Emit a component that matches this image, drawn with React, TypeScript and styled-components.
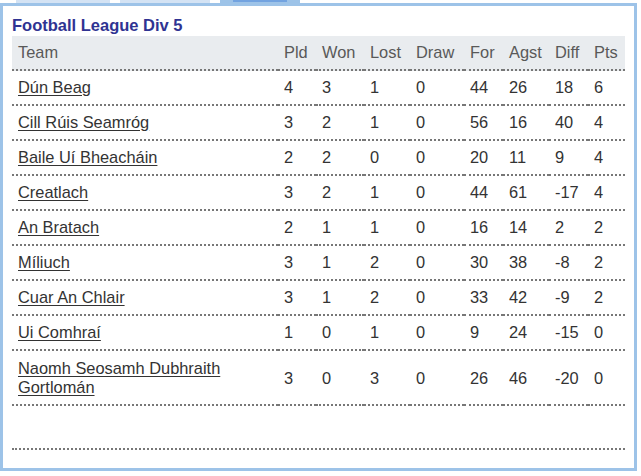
import React from "react";
import styled, { createGlobalStyle } from "styled-components";

const Global = createGlobalStyle`
  html, body { margin: 0; padding: 0; background: #ffffff; }
  body { font-family: "Liberation Sans", Arial, sans-serif; }
`;

const Page = styled.div`
  width: 641px;
  height: 476px;
  overflow: hidden;
  background: #ffffff;
`;

const TabBar = styled.div`
  display: flex;
  gap: 10px;
  height: 3px;
  padding-left: 16px;
`;

const Tab = styled.div<{ $w: number; $active?: boolean }>`
  width: ${(p) => p.$w}px;
  height: 3px;
  background: ${(p) => (p.$active ? "#9dc3e8" : "#d4e3f4")};
  display: flex;
  justify-content: center;
  &::after {
    content: "";
    display: ${(p) => (p.$active ? "block" : "none")};
    width: 54px;
    height: 2px;
    background: #72a3e0;
  }
`;

const Panel = styled.div`
  box-sizing: border-box;
  width: 637px;
  height: 468px;
  border: 3px solid #9dc3e8;
  padding: 9px 0 0 9px;
`;

const Title = styled.h2`
  margin: 0;
  font-size: 16.5px;
  line-height: 20px;
  font-weight: bold;
  color: #2f3392;
`;

const Table = styled.table`
  margin-top: 1px;
  width: 613px;
  table-layout: fixed;
  border-collapse: separate;
  border-spacing: 0;
  font-size: 16.4px;
  line-height: 19px;
  color: #333333;
`;

const HeadCell = styled.th`
  background: #e9ecef;
  color: #595959;
  font-weight: normal;
  text-align: left;
  padding: 7px 6px 7px;
  border-bottom: 2px dotted #777777;
  white-space: nowrap;
`;

const Cell = styled.td<{ $tall?: boolean }>`
  text-align: left;
  vertical-align: middle;
  padding: ${(p) => (p.$tall ? "8px 6px 7px" : "7px 6px")};
  border-bottom: 2px dotted #777777;
  white-space: nowrap;
`;

const TeamCell = styled(Cell)`
  white-space: normal;
`;

const TeamLink = styled.a`
  color: #333333;
  text-decoration: underline;
  text-underline-offset: 2px;
`;

const EmptyCell = styled.td`
  height: 42px;
  padding: 0;
  border-bottom: 2px dotted #777777;
`;

const widths = [266, 38, 48, 46, 54, 39, 46, 39, 37];
const headers = ["Team", "Pld", "Won", "Lost", "Draw", "For", "Agst", "Diff", "Pts"];

const rows: [string, number, number, number, number, number, number, number, number][] = [
  ["Dún Beag", 4, 3, 1, 0, 44, 26, 18, 6],
  ["Cill Rúis Seamróg", 3, 2, 1, 0, 56, 16, 40, 4],
  ["Baile Uí Bheacháin", 2, 2, 0, 0, 20, 11, 9, 4],
  ["Creatlach", 3, 2, 1, 0, 44, 61, -17, 4],
  ["An Bratach", 2, 1, 1, 0, 16, 14, 2, 2],
  ["Míliuch", 3, 1, 2, 0, 30, 38, -8, 2],
  ["Cuar An Chlair", 3, 1, 2, 0, 33, 42, -9, 2],
  ["Ui Comhraí", 1, 0, 1, 0, 9, 24, -15, 0],
  ["Naomh Seosamh Dubhraith Gortlomán", 3, 0, 3, 0, 26, 46, -20, 0],
];

export default function App() {
  return (
    <Page>
      <Global />
      <TabBar>
        <Tab $w={94} />
        <Tab $w={90} />
        <Tab $w={80} $active />
      </TabBar>
      <Panel>
        <Title>Football League Div 5</Title>
        <Table>
          <colgroup>
            {widths.map((w, i) => (
              <col key={i} style={{ width: w }} />
            ))}
          </colgroup>
          <thead>
            <tr>
              {headers.map((h) => (
                <HeadCell key={h}>{h}</HeadCell>
              ))}
            </tr>
          </thead>
          <tbody>
            {rows.map((r) => {
              const tall = r[0].length > 30;
              return (
                <tr key={r[0]}>
                  <TeamCell $tall={tall}>
                    <TeamLink href="#">{r[0]}</TeamLink>
                  </TeamCell>
                  {r.slice(1).map((v, i) => (
                    <Cell key={i} $tall={tall}>
                      {v}
                    </Cell>
                  ))}
                </tr>
              );
            })}
            <tr>
              <EmptyCell colSpan={9} />
            </tr>
          </tbody>
        </Table>
      </Panel>
    </Page>
  );
}
